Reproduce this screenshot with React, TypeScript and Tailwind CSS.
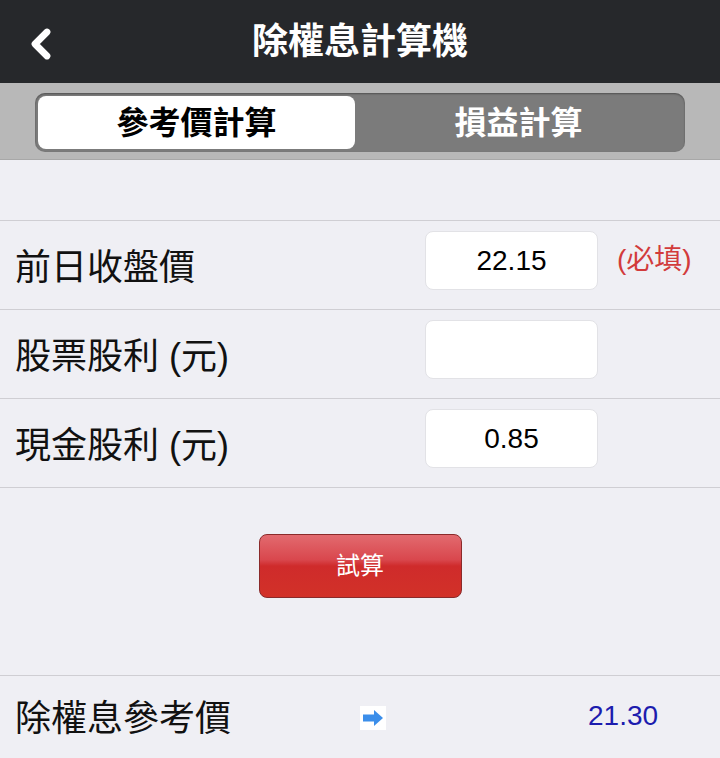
import { ChevronLeft } from 'lucide-react';

const FONT = { fontFamily: '"Liberation Sans", "Noto Sans CJK TC", sans-serif' };

const ROWS = [
  { label: '前日收盤價', value: '22.15', required: true },
  { label: '股票股利 (元)', value: '', required: false },
  { label: '現金股利 (元)', value: '0.85', required: false },
];

function ArrowIcon() {
  return (
    <span className="w-[26px] h-[24px] bg-white flex items-center justify-center">
      <svg width="22" height="18" viewBox="0 0 22 18">
        <path d="M1 5.5h11V1l9 8-9 8v-4.5H1z" fill="#3b8eea" />
      </svg>
    </span>
  );
}

export default function App() {
  return (
    <div className="w-[720px] h-[758px] bg-[#efeff4] overflow-hidden" style={FONT}>
      {/* Nav bar */}
      <div className="h-[83px] bg-[#26282b] relative flex items-center justify-center">
        <ChevronLeft size={48} strokeWidth={3.4} className="text-white absolute left-[17px] top-[20px]" />
        <h1 className="text-white text-[36px] font-bold">除權息計算機</h1>
      </div>

      {/* Segmented control */}
      <div className="h-[77px] bg-[#b8b8b8] px-[35px] pt-[10px] border-b border-[#a8a8a8]">
        <div className="h-[59px] bg-[#7b7b7b] rounded-[10px] p-[3px] flex shadow-[inset_0_1px_2px_rgba(0,0,0,0.35)]">
          <div className="w-[317px] bg-white rounded-[8px] flex items-center justify-center text-[32px] font-bold text-black">
            參考價計算
          </div>
          <div className="flex-1 flex items-center justify-center text-[32px] font-bold text-white">
            損益計算
          </div>
        </div>
      </div>

      <div className="h-[60px]" />

      {/* Inputs */}
      <div className="border-t border-[#cfced3]">
        {ROWS.map((r) => (
          <div key={r.label} className="h-[89px] border-b border-[#cfced3] flex items-center pl-[15px]">
            <span className="w-[410px] text-[36px] text-[#111] pt-[6px]">{r.label}</span>
            <div className="w-[173px] h-[59px] bg-white rounded-[8px] border border-[#e2e2e6] flex items-center justify-center text-[28px] text-black -mt-[9px]">
              {r.value}
            </div>
            {r.required && <span className="ml-[19px] text-[28px] text-[#d23b3b] -mt-[10px]">(必填)</span>}
          </div>
        ))}
      </div>

      {/* Calculate button */}
      <div className="h-[187px] flex justify-center pt-[46px]">
        <button className="w-[203px] h-[64px] rounded-[8px] border border-[#8a2a2a] bg-[linear-gradient(to_bottom,#e26a6f_0%,#d9474d_40%,#cf2b2b_50%,#d23128_100%)] text-white text-[24px] flex items-center justify-center">
          試算
        </button>
      </div>

      {/* Result */}
      <div className="border-t border-[#cfced3] h-[84px] flex items-center pl-[15px]">
        <span className="w-[345px] text-[36px] text-[#111] pt-[2px]">除權息參考價</span>
        <ArrowIcon />
        <span className="ml-[202px] text-[28px] text-[#1c1cae] -mt-[4px]">21.30</span>
      </div>
    </div>
  );
}
